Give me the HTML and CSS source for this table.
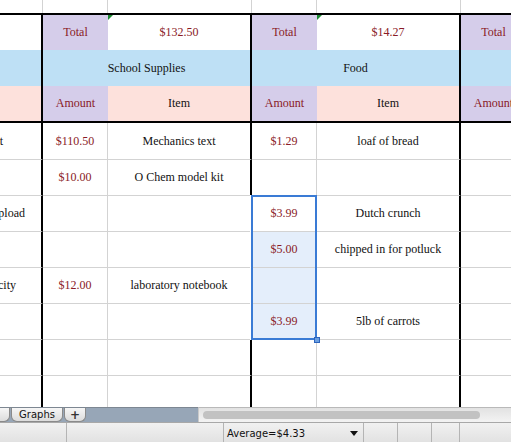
FILE: index.html
```html
<!DOCTYPE html>
<html>
<head>
<meta charset="utf-8">
<link rel="stylesheet" href="styles.css">
</head>
<body>
<div class="sheet">
  <div class="row r-top">
    <div class="c"></div><div class="c"></div><div class="c"></div><div class="c"></div><div class="c"></div><div class="c"></div>
  </div>
  <div class="block">
    <div class="row r-h1">
      <div class="c thick"></div>
      <div class="c lav red">Total</div>
      <div class="c red thick"><span class="flag"></span>$132.50</div>
      <div class="c lav red">Total</div>
      <div class="c red thick"><span class="flag"></span>$14.27</div>
      <div class="c lav red">Total</div>
    </div>
    <div class="row r-h2">
      <div class="c blue thick"></div>
      <div class="c blue span2 thick">School Supplies</div>
      <div class="c blue span2 thick">Food</div>
      <div class="c blue"></div>
    </div>
    <div class="row r-h3">
      <div class="c pink thick"></div>
      <div class="c lav red">Amount</div>
      <div class="c pink thick">Item</div>
      <div class="c lav red">Amount</div>
      <div class="c pink thick">Item</div>
      <div class="c lav red">Amount</div>
    </div>
  </div>
  <div class="row d first">
    <div class="c c0 ov ov-t">Textbook rent</div>
    <div class="c c1 red">$110.50</div>
    <div class="c c2">Mechanics text</div>
    <div class="c c3 red">$1.29</div>
    <div class="c c4">loaf of bread</div>
    <div class="c c5"></div>
  </div>
  <div class="row d">
    <div class="c c0"></div>
    <div class="c c1 red">$10.00</div>
    <div class="c c2">O Chem model kit</div>
    <div class="c c3"></div>
    <div class="c c4"></div>
    <div class="c c5"></div>
  </div>
  <div class="row d">
    <div class="c c0 ov ov-p">photo upload</div>
    <div class="c c1"></div>
    <div class="c c2"></div>
    <div class="c c3 red">$3.99</div>
    <div class="c c4">Dutch crunch</div>
    <div class="c c5"></div>
  </div>
  <div class="row d">
    <div class="c c0"></div>
    <div class="c c1"></div>
    <div class="c c2"></div>
    <div class="c c3 red sel">$5.00</div>
    <div class="c c4">chipped in for potluck</div>
    <div class="c c5"></div>
  </div>
  <div class="row d">
    <div class="c c0 ov ov-c">electricity</div>
    <div class="c c1 red">$12.00</div>
    <div class="c c2">laboratory notebook</div>
    <div class="c c3 sel"></div>
    <div class="c c4"></div>
    <div class="c c5"></div>
  </div>
  <div class="row d">
    <div class="c c0"></div>
    <div class="c c1"></div>
    <div class="c c2"></div>
    <div class="c c3 red sel">$3.99</div>
    <div class="c c4">5lb of carrots</div>
    <div class="c c5"></div>
  </div>
  <div class="row d">
    <div class="c c0"></div><div class="c c1"></div><div class="c c2"></div><div class="c c3"></div><div class="c c4"></div><div class="c c5"></div>
  </div>
  <div class="row d">
    <div class="c c0"></div><div class="c c1"></div><div class="c c2"></div><div class="c c3"></div><div class="c c4"></div><div class="c c5"></div>
  </div>
  <div class="selection"><span class="handle"></span></div>
</div>
<div class="tabbar">
  <div class="tabs">
    <div class="tab part"></div>
    <div class="tab graphs">Graphs</div>
    <div class="tab plus">+</div>
  </div>
  <div class="hscroll"><div class="thumb"></div></div>
</div>
<div class="status">
  <div class="seg s1"></div>
  <div class="seg s2"></div>
  <div class="seg s3"><span class="avg">Average=$4.33</span><span class="caret"></span></div>
  <div class="seg s4"></div>
  <div class="seg s5"></div>
  <div class="seg s6"></div>
  <div class="seg s7"></div>
</div>
</body>
</html>
```
FILE: styles.css
```css
html, body {
  margin: 0;
  padding: 0;
  background: #fff;
  width: 511px;
  height: 442px;
  overflow: hidden;
}

.sheet {
  position: relative;
  height: 407px;
  width: 511px;
  overflow: hidden;
  font-family: "Liberation Serif", "Times New Roman", serif;
  font-size: 12px;
  color: #111;
}

.row {
  display: grid;
  grid-template-columns: 43px 65px 144px 65px 144px 65px;
  width: 526px;
}

.c {
  box-sizing: border-box;
  display: flex;
  align-items: center;
  justify-content: center;
  white-space: nowrap;
  overflow: hidden;
  position: relative;
}

.r-top { height: 13px; }
.r-top .c { border-right: 1px solid #d3d3d3; }

.block {
  border-top: 2px solid #000;
  border-bottom: 2px solid #000;
  width: 526px;
}
.r-h1 { height: 35px; }
.r-h2 { height: 36px; }
.r-h3 { height: 35px; }

.thick { border-right: 2px solid #000; }
.span2 { grid-column: span 2; }

.lav { background: #d5cdea; }
.blue { background: #bee0f5; }
.pink { background: #fde1dc; }
.red { color: #8a1a26; }

.flag {
  position: absolute;
  left: 0;
  top: 0;
  width: 0;
  height: 0;
  border-top: 5px solid #1d8a33;
  border-right: 5px solid transparent;
}

.d { height: 36px; }
.d.first { height: 37px; }
.d .c { border-bottom: 1px solid #d3d3d3; }
.d .c0, .d .c2, .d .c4 { border-right: 2px solid #000; }
.d .c1, .d .c3 { border-right: 1px solid #d3d3d3; }

.ov { justify-content: flex-end; }
.ov-t { padding-right: 38px; }
.ov-p { padding-right: 16px; }
.ov-c { padding-right: 25px; }

.sel { background: #e4eefb; }

.selection {
  position: absolute;
  left: 251px;
  top: 195px;
  width: 66px;
  height: 145px;
  box-sizing: border-box;
  border: 2px solid #3a7bd5;
  box-shadow: -1px 0 0 #fff;
}
.handle {
  position: absolute;
  right: -5px;
  bottom: -5px;
  width: 6px;
  height: 6px;
  background: #6c9fe0;
  border: 1px solid #2c64bd;
  box-sizing: border-box;
}

/* tab bar */
.tabbar {
  display: flex;
  height: 15px;
  font-family: "DejaVu Sans", sans-serif;
  font-size: 10px;
  color: #111;
}
.tabs {
  width: 198px;
  background: #97a6b7;
  display: flex;
  gap: 1px;
  border-top: 1px solid #7d8792;
  box-sizing: border-box;
}
.tab {
  box-sizing: border-box;
  height: 14px;
  background: linear-gradient(#f6f6f6, #dcdcdc);
  border: 1px solid #8a8a8a;
  border-top: none;
  border-radius: 0 0 6px 6px;
  display: flex;
  align-items: center;
  justify-content: center;
}
.tab.part {
  width: 12px;
  margin-left: -2px;
  border-left: none;
  border-radius: 0 0 6px 0;
}
.tab.graphs { width: 52px; }
.tab.plus { width: 22px; font-size: 12px; font-weight: bold; color: #333; }

.hscroll {
  flex: 1;
  display: flex;
  align-items: center;
  background: linear-gradient(#e2e2e2, #f3f3f3);
  border-left: 1px solid #c9c9c9;
  border-top: 1px solid #b9b9b9;
  box-sizing: border-box;
  padding-left: 4px;
}
.thumb {
  width: 277px;
  height: 8px;
  border-radius: 4px;
  background: #c2c2c2;
}

/* status bar */
.status {
  display: flex;
  height: 20px;
  border-top: 1px solid #a8a8a8;
  background: linear-gradient(#f1f1f1, #e1e1e1);
  font-family: "DejaVu Sans", sans-serif;
  font-size: 10px;
  color: #111;
}
.seg {
  box-sizing: border-box;
  border-right: 1px solid #b4b4b4;
  display: flex;
  align-items: center;
}
.s1 { width: 67px; }
.s2 { width: 157px; }
.s3 { width: 140px; padding-left: 3px; }
.s4 { width: 34px; }
.s5 { width: 34px; }
.s6 { width: 28px; }
.s7 { flex: 1; border-right: none; }
.avg { flex: 1; }
.caret {
  width: 0;
  height: 0;
  border-left: 4px solid transparent;
  border-right: 4px solid transparent;
  border-top: 5px solid #111;
  margin-right: 5px;
}
```
